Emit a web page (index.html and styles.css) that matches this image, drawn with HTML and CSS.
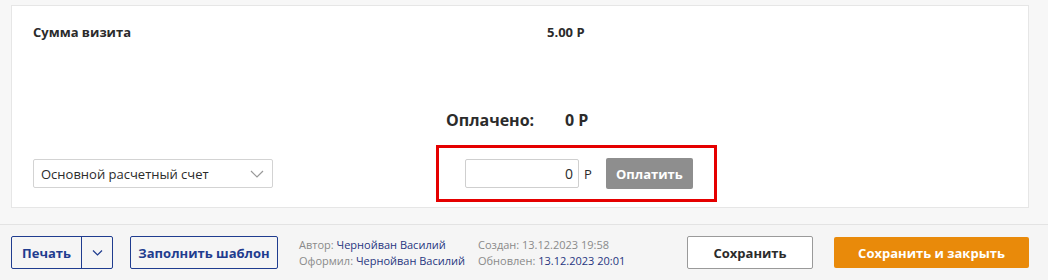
FILE: index.html
```html
<!DOCTYPE html>
<html lang="ru">
<head>
  <meta charset="UTF-8" />
  <title>Оплата визита</title>
  <link rel="stylesheet" href="styles.css">
</head>
<body>
  <div class="card">
    <div class="sum-row">
      <span class="sum-label">Сумма визита</span>
      <span class="sum-value">5.00 Р</span>
    </div>

    <div class="paid-row">
      <span class="paid-label">Оплачено:</span>
      <span class="paid-value">0 Р</span>
    </div>

    <div class="pay-row">
      <div class="select">
        <span>Основной расчетный счет</span>
        <svg width="14" height="8" viewBox="0 0 14 8"><path d="M1 1l6 6 6-6" fill="none" stroke="#999" stroke-width="1.2"/></svg>
      </div>

      <div class="pay-box">
        <input class="amount" type="text" value="0">
        <span class="currency">Р</span>
        <button class="pay-btn">Оплатить</button>
      </div>
    </div>
  </div>

  <div class="footer">
    <div class="split-btn">
      <span class="split-main">Печать</span>
      <span class="split-arrow">
        <svg width="11" height="6" viewBox="0 0 11 6"><path d="M1 .5l4.5 4.5 4.5-4.5" fill="none" stroke="#1f3c8f" stroke-width="1.2"/></svg>
      </span>
    </div>
    <button class="btn-outline">Заполнить шаблон</button>

    <div class="meta">
      <div><span class="muted">Автор:</span> <span class="link">Чернойван Василий</span></div>
      <div><span class="muted">Оформил:</span> <span class="link">Чернойван Василий</span></div>
    </div>
    <div class="meta dates">
      <div><span class="muted">Создан: 13.12.2023 19:58</span></div>
      <div><span class="muted">Обновлен:</span> <span class="link">13.12.2023 20:01</span></div>
    </div>

    <button class="btn-save">Сохранить</button>
    <button class="btn-close">Сохранить и закрыть</button>
  </div>
</body>
</html>
```

FILE: styles.css
```css
body {
  margin: 0;
  font-family: 'Open Sans', 'Liberation Sans', sans-serif;
  background: #f7f7f7;
  color: #2b2b2b;
}

.card {
  margin: 5px 19px 0 11px;
  height: 201px;
  background: #fff;
  border: 1px solid #e6e6e6;
  padding: 0 21px;
}

.sum-row {
  display: grid;
  grid-template-columns: 514px auto;
  margin-top: 17px;
  font-size: 13px;
  font-weight: 700;
  line-height: 18px;
}

.paid-row {
  display: flex;
  margin: 68px 0 0 413px;
  font-size: 16px;
  font-weight: 700;
  line-height: 22px;
}

.paid-label {
  width: 119px;
}

.pay-row {
  display: flex;
  align-items: center;
  margin-top: 14px;
}

.select {
  width: 223px;
  height: 27px;
  border: 1px solid #d3d3d3;
  border-radius: 2px;
  padding: 0 8px 0 7px;
  display: flex;
  align-items: center;
  justify-content: space-between;
  font-size: 13px;
}

.pay-box {
  margin-left: 163px;
  width: 275px;
  height: 51px;
  border: 3px solid #e50000;
  display: flex;
  align-items: center;
}

.amount {
  margin-left: 26px;
  width: 102px;
  height: 27px;
  border: 1px solid #cfcfcf;
  border-radius: 2px;
  padding: 0 5px;
  text-align: right;
  font-family: inherit;
  font-size: 14px;
  color: #2b2b2b;
}

.currency {
  margin-left: 5px;
  font-size: 13px;
}

.pay-btn {
  margin-left: 14px;
  width: 87px;
  height: 31px;
  border: none;
  border-radius: 2px;
  background: #8e8e8e;
  color: #fff;
  font-family: inherit;
  font-weight: 700;
  font-size: 13px;
}

.footer {
  margin-top: 16px;
  height: 55px;
  border-top: 1px solid #e3e3e3;
  background: #f5f5f5;
  display: flex;
  align-items: center;
  padding-left: 11px;
}

.split-btn {
  display: flex;
  height: 31px;
  border: 1px solid #1f3c8f;
  border-radius: 2px;
  color: #1f3c8f;
  font-size: 13px;
  font-weight: 700;
}

.split-main {
  width: 69px;
  display: flex;
  align-items: center;
  justify-content: center;
  border-right: 1px solid #1f3c8f;
}

.split-arrow {
  width: 30px;
  display: flex;
  align-items: center;
  justify-content: center;
}

.btn-outline {
  margin-left: 17px;
  width: 148px;
  height: 33px;
  border: 1px solid #1f3c8f;
  border-radius: 2px;
  background: none;
  color: #1f3c8f;
  font-family: inherit;
  font-weight: 700;
  font-size: 13px;
}

.meta {
  margin-left: 21px;
  font-size: 11px;
  line-height: 16px;
}

.meta.dates {
  margin-left: 13px;
}

.muted {
  color: #8a8a8a;
}

.link {
  color: #27367f;
}

.btn-save {
  margin-left: auto;
  width: 126px;
  height: 33px;
  border: 1px solid #9a9a9a;
  border-radius: 2px;
  background: #fff;
  color: #2b2b2b;
  font-family: inherit;
  font-weight: 700;
  font-size: 13px;
}

.btn-close {
  margin: 0 19px 0 21px;
  width: 195px;
  height: 31px;
  border: none;
  border-radius: 2px;
  background: #e98a0a;
  color: #fff;
  font-family: inherit;
  font-weight: 700;
  font-size: 13px;
}
```
